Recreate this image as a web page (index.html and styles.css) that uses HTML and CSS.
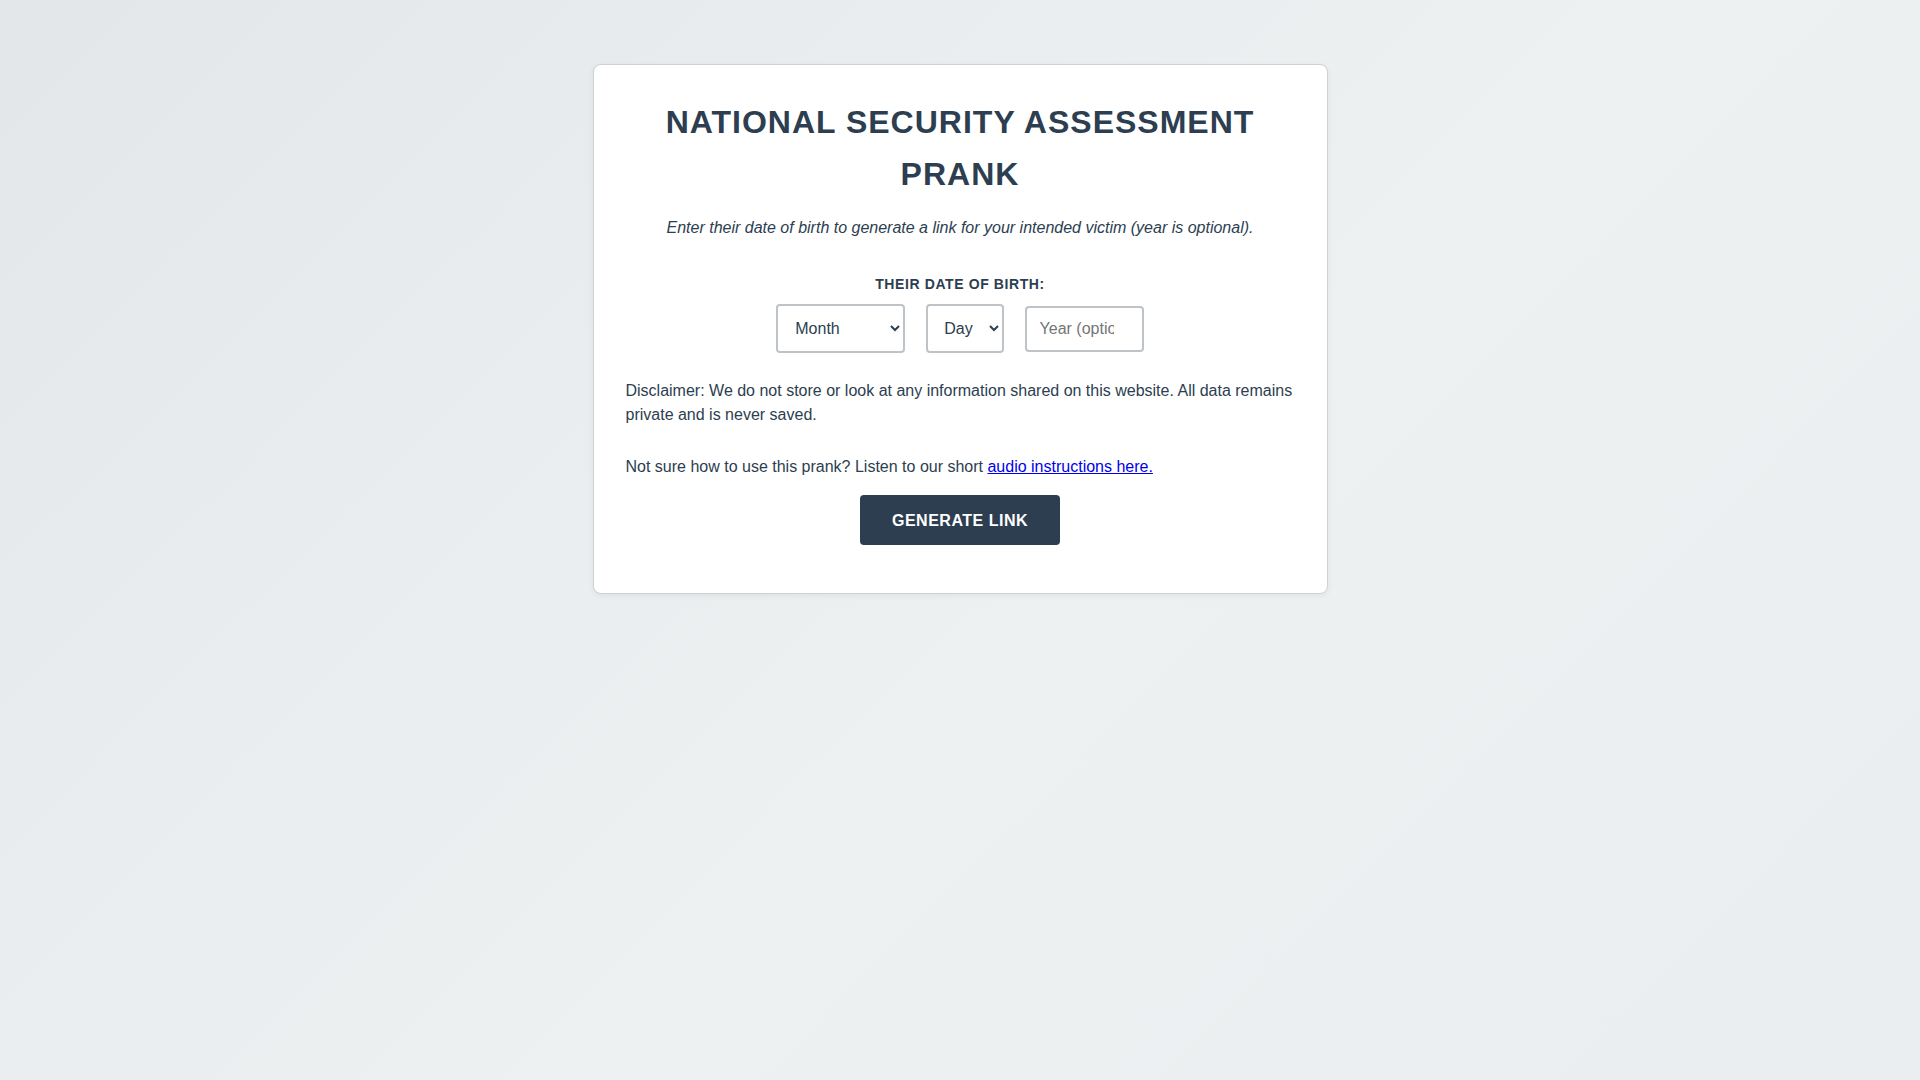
FILE: index.html
```html
<!DOCTYPE html>
<html lang="en">
<head>
    <meta charset="UTF-8">
    <meta name="viewport" content="width=device-width, initial-scale=1.0">
    <title>National Security Assessment Prank</title>
    <link rel="stylesheet" href="styles.css">
</head>
<body>
    <div class="card">
        <h1>National Security Assessment Prank</h1>
        <p class="intro">Enter their date of birth to generate a link for your intended victim (year is optional).</p>

        <form id="dob-form">
            <div class="dob-group">
                <label class="dob-label" for="month">Their date of birth:</label>
                <div class="dob-fields">
                    <select id="month" name="month">
                        <option value="">Month</option>
                        <option value="1">January</option>
                        <option value="2">February</option>
                        <option value="3">March</option>
                        <option value="4">April</option>
                        <option value="5">May</option>
                        <option value="6">June</option>
                        <option value="7">July</option>
                        <option value="8">August</option>
                        <option value="9">September</option>
                        <option value="10">October</option>
                        <option value="11">November</option>
                        <option value="12">December</option>
                    </select>
                    <select id="day" name="day">
                        <option value="">Day</option>
                    </select>
                    <input type="number" id="year" name="year" min="1900" max="2025" placeholder="Year (optional)">
                </div>
            </div>

            <p class="disclaimer">Disclaimer: We do not store or look at any information shared on this website. All data remains private and is never saved.</p>

            <p class="help">Not sure how to use this prank? Listen to our short <a href="#">audio instructions here.</a></p>

            <div class="actions">
                <button type="submit">Generate Link</button>
            </div>
        </form>
    </div>

    <script>
        document.addEventListener('DOMContentLoaded', function () {
            const day = document.getElementById('day');
            for (let i = 1; i <= 31; i++) {
                const opt = document.createElement('option');
                opt.value = i;
                opt.textContent = i;
                day.appendChild(opt);
            }
        });
    </script>
</body>
</html>
```

FILE: styles.css
```css
/* Global Styles */
body {
    font-family: 'Liberation Sans', Arial, sans-serif;
    background: linear-gradient(135deg, #e3e7ea 0%, #eef1f2 55%, #ebeef0 100%);
    color: #2c3e50;
    line-height: 1.5;
    margin: 0;
    min-height: 100vh;
    padding-top: 64px;
    box-sizing: border-box;
}

/* Card */
.card {
    width: 669px;
    margin: 0 auto;
    padding: 31px 32px 32px;
    background-color: #fff;
    border: 1px solid #cdd2d5;
    border-radius: 8px;
    box-shadow: 0 2px 6px rgba(0, 0, 0, 0.06);
}

/* Header */
h1 {
    margin: 0;
    font-size: 32px;
    line-height: 52px;
    letter-spacing: 1px;
    text-transform: uppercase;
    text-align: center;
    color: #2c3e50;
}

.intro {
    margin: 16px 0 0;
    font-size: 16px;
    font-style: italic;
    text-align: center;
}

/* Date of birth */
.dob-group {
    margin-top: 34px;
    text-align: center;
}

.dob-label {
    display: block;
    margin-bottom: 9px;
    font-size: 14px;
    font-weight: bold;
    letter-spacing: 0.6px;
    text-transform: uppercase;
}

.dob-fields select,
.dob-fields input {
    margin: 0 8px;
    padding: 12.8px;
    border: 2px solid #bdc3c7;
    border-radius: 4px;
    background-color: #fff;
    font-family: inherit;
    font-size: 16px;
    color: #2c3e50;
}

.dob-fields input {
    box-sizing: border-box;
    width: 119px;
    padding: 12px 13px;
}

.dob-fields input::placeholder {
    color: #757575;
}

/* Text blocks */
.disclaimer {
    margin: 26px 0 0;
}

.help {
    margin: 28px 0 0;
}

.help a {
    color: #0000ee;
}

/* Button */
.actions {
    margin: 16px 0 16px;
    text-align: center;
}

button {
    background-color: #2c3e50;
    color: #fff;
    padding: 16px 32px 15px;
    border: none;
    border-radius: 4px;
    font-family: inherit;
    font-size: 16px;
    font-weight: bold;
    line-height: 19px;
    letter-spacing: 0.5px;
    text-transform: uppercase;
    cursor: pointer;
}
```
